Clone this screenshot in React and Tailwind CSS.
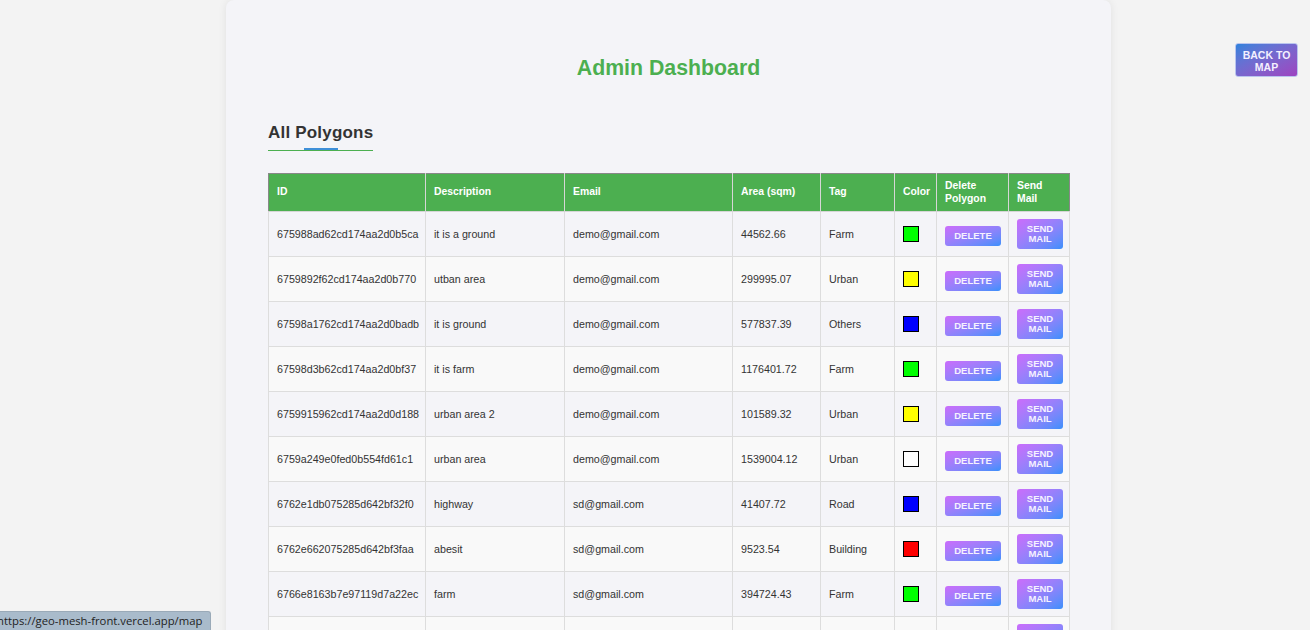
import React from 'react';

const polygons = [
    { id: '675988ad62cd174aa2d0b5ca', desc: 'it is a ground', email: 'demo@gmail.com', area: '44562.66', tag: 'Farm', color: '#00ff00' },
    { id: '6759892f62cd174aa2d0b770', desc: 'utban area', email: 'demo@gmail.com', area: '299995.07', tag: 'Urban', color: '#ffff00' },
    { id: '67598a1762cd174aa2d0badb', desc: 'it is ground', email: 'demo@gmail.com', area: '577837.39', tag: 'Others', color: '#0000ff' },
    { id: '67598d3b62cd174aa2d0bf37', desc: 'it is farm', email: 'demo@gmail.com', area: '1176401.72', tag: 'Farm', color: '#00ff00' },
    { id: '6759915962cd174aa2d0d188', desc: 'urban area 2', email: 'demo@gmail.com', area: '101589.32', tag: 'Urban', color: '#ffff00' },
    { id: '6759a249e0fed0b554fd61c1', desc: 'urban area', email: 'demo@gmail.com', area: '1539004.12', tag: 'Urban', color: '#ffffff' },
    { id: '6762e1db075285d642bf32f0', desc: 'highway', email: 'sd@gmail.com', area: '41407.72', tag: 'Road', color: '#0000ff' },
    { id: '6762e662075285d642bf3faa', desc: 'abesit', email: 'sd@gmail.com', area: '9523.54', tag: 'Building', color: '#ff0000' },
    { id: '6766e8163b7e97119d7a22ec', desc: 'farm', email: 'sd@gmail.com', area: '394724.43', tag: 'Farm', color: '#00ff00' },
    { id: '6766e9a03b7e97119d7a2411', desc: 'river side', email: 'sd@gmail.com', area: '88213.09', tag: 'Others', color: '#0000ff' },
    { id: '6766ea7d3b7e97119d7a2530', desc: 'market', email: 'sd@gmail.com', area: '15320.80', tag: 'Building', color: '#ff0000' },
];

const columns = [
    { label: 'ID', w: 'w-[157px]' },
    { label: 'Description', w: 'w-[139px]' },
    { label: 'Email', w: 'w-[168px]' },
    { label: 'Area (sqm)', w: 'w-[88px]' },
    { label: 'Tag', w: 'w-[74px]' },
    { label: 'Color', w: 'w-[42px]' },
    { label: 'Delete Polygon', w: 'w-[72px]' },
    { label: 'Send Mail', w: 'w-[61px]' },
];

const btn = 'rounded-[3px] bg-linear-to-br from-[#cb6cfb] to-[#368ffb] text-[#f6f2ff] text-[9.5px] font-bold leading-[10px] uppercase';

export default function App() {
    return (
        <div className="relative min-h-screen bg-[#f3f3f3] pl-[226px]" style={{ fontFamily: '"Liberation Sans", Arial, sans-serif' }}>
            {/* Dashboard card */}
            <div className="w-[885px] rounded-lg bg-[#f4f4f8] px-[42px] pt-[55px] pb-10 shadow-[0_0_8px_rgba(0,0,0,0.08)]">
                <h1 className="text-center text-[21.3px] font-bold leading-[26px] text-[#4caf50]">Admin Dashboard</h1>

                <div className="mt-[40px]">
                    <h3 className="relative inline-block border-b border-[#4caf50] pb-[8px] text-[17px] font-bold leading-[19px] tracking-[0.2px] text-[#333]">
                        All Polygons
                        <span className="absolute bottom-0 left-1/2 h-[2px] w-[34px] -translate-x-1/2 bg-[#3f8fd8]" />
                    </h3>
                </div>

                <table className="mt-[22px] w-[801px] table-fixed border-collapse text-left">
                    <thead>
                        <tr className="bg-[#4caf50]">
                            {columns.map((c, i) => (
                                <th
                                    key={c.label}
                                    className={`${c.w} border border-[#d6d6d6] border-t-[#888] px-2 py-[6px] align-middle text-[10.4px] font-bold leading-[12.5px] text-white ${i === 0 ? 'border-l-[#888]' : ''} ${i === columns.length - 1 ? 'border-r-[#888]' : ''}`}
                                >
                                    {c.label}
                                </th>
                            ))}
                        </tr>
                    </thead>
                    <tbody>
                        {polygons.map((p, idx) => (
                            <tr key={p.id} className={idx % 2 === 1 ? 'bg-[#f9f9f9]' : 'bg-[#f4f4f8]'}>
                                <td className="border border-[#dddddd] px-2 py-[7px] text-[10.7px] text-[#333]">{p.id}</td>
                                <td className="border border-[#dddddd] px-2 py-[7px] text-[10.7px] text-[#333]">{p.desc}</td>
                                <td className="border border-[#dddddd] px-2 py-[7px] text-[10.7px] text-[#333]">{p.email}</td>
                                <td className="border border-[#dddddd] px-2 py-[7px] text-[10.7px] text-[#333]">{p.area}</td>
                                <td className="border border-[#dddddd] px-2 py-[7px] text-[10.7px] text-[#333]">{p.tag}</td>
                                <td className="border border-[#dddddd] px-2 py-[7px]">
                                    <div className="h-4 w-4 border border-black" style={{ backgroundColor: p.color }} />
                                </td>
                                <td className="border border-[#dddddd] px-2 py-[7px]">
                                    <button className={`${btn} h-5 w-[56px]`}>Delete</button>
                                </td>
                                <td className="border border-[#dddddd] px-2 py-[7px]">
                                    <button className={`${btn} h-[30px] w-[46px]`}>Send<br />Mail</button>
                                </td>
                            </tr>
                        ))}
                    </tbody>
                </table>
            </div>

            {/* Back to map */}
            <button className="absolute left-[1235px] top-[43px] h-[34px] w-[63px] rounded-[3px] border border-[#b9c4ee] bg-linear-to-br from-[#2a82dc] to-[#9d42c0] pt-[2px] text-[10.5px] font-bold leading-[12px] text-[#f4f0ff]">
                BACK TO<br />MAP
            </button>

            {/* Browser status bubble */}
            <div className="fixed bottom-0 left-0 flex h-[19px] w-[211px] items-center overflow-hidden rounded-tr-[3px] border-t border-r border-[#9aaab8] bg-[#a9bbcb] text-[11.3px] text-[#1e1e1e]" style={{ fontFamily: '"Open Sans", sans-serif' }}>
                <span className="-ml-[3px] whitespace-nowrap">https://geo-mesh-front.vercel.app/map</span>
            </div>
        </div>
    );
}
